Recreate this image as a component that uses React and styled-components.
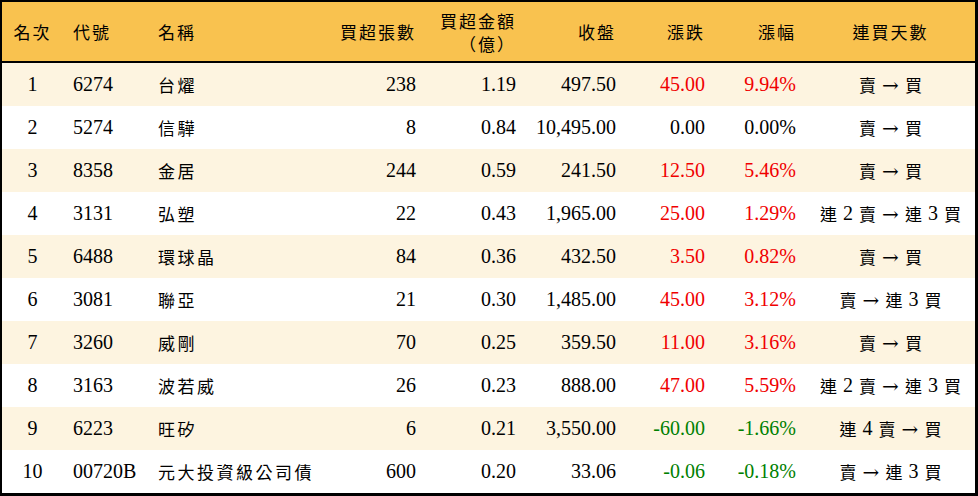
import React from "react";
import styled, { createGlobalStyle } from "styled-components";

const GlobalStyle = createGlobalStyle`
  html, body {
    margin: 0;
    padding: 0;
    background: #ffffff;
  }
`;

const rows = [
  { rank: 1, code: "6274", name: "台燿", vol: "238", amt: "1.19", close: "497.50", chg: "45.00", pct: "9.94%", days: ["賣", "→", "買"] },
  { rank: 2, code: "5274", name: "信驊", vol: "8", amt: "0.84", close: "10,495.00", chg: "0.00", pct: "0.00%", days: ["賣", "→", "買"] },
  { rank: 3, code: "8358", name: "金居", vol: "244", amt: "0.59", close: "241.50", chg: "12.50", pct: "5.46%", days: ["賣", "→", "買"] },
  { rank: 4, code: "3131", name: "弘塑", vol: "22", amt: "0.43", close: "1,965.00", chg: "25.00", pct: "1.29%", days: ["連", "2", "賣", "→", "連", "3", "買"] },
  { rank: 5, code: "6488", name: "環球晶", vol: "84", amt: "0.36", close: "432.50", chg: "3.50", pct: "0.82%", days: ["賣", "→", "買"] },
  { rank: 6, code: "3081", name: "聯亞", vol: "21", amt: "0.30", close: "1,485.00", chg: "45.00", pct: "3.12%", days: ["賣", "→", "連", "3", "買"] },
  { rank: 7, code: "3260", name: "威剛", vol: "70", amt: "0.25", close: "359.50", chg: "11.00", pct: "3.16%", days: ["賣", "→", "買"] },
  { rank: 8, code: "3163", name: "波若威", vol: "26", amt: "0.23", close: "888.00", chg: "47.00", pct: "5.59%", days: ["連", "2", "賣", "→", "連", "3", "買"] },
  { rank: 9, code: "6223", name: "旺矽", vol: "6", amt: "0.21", close: "3,550.00", chg: "-60.00", pct: "-1.66%", days: ["連", "4", "賣", "→", "買"] },
  { rank: 10, code: "00720B", name: "元大投資級公司債", vol: "600", amt: "0.20", close: "33.06", chg: "-0.06", pct: "-0.18%", days: ["賣", "→", "連", "3", "買"] },
];

const trendOf = (v) => {
  const n = parseFloat(v);
  if (n > 0) return "up";
  if (n < 0) return "down";
  return "flat";
};

const isHan = (s) => /[\u4e00-\u9fff]/.test(s);

const StreakPart = ({ text }) => {
  if (text === "→") return <Arrow>{text}</Arrow>;
  if (isHan(text)) return <StreakHan>{text}</StreakHan>;
  return <span>{text}</span>;
};

const App = () => {
  return (
    <>
      <GlobalStyle />
      <Table>
        <colgroup>
          <col style={{ width: 61 }} />
          <col style={{ width: 85 }} />
          <col style={{ width: 180 }} />
          <col style={{ width: 98 }} />
          <col style={{ width: 100 }} />
          <col style={{ width: 100 }} />
          <col style={{ width: 89 }} />
          <col style={{ width: 91 }} />
          <col />
        </colgroup>
        <thead>
          <tr>
            <Th align="center">名次</Th>
            <Th>代號</Th>
            <Th>名稱</Th>
            <Th align="right">買超張數</Th>
            <Th align="right">
              買超金額
              <br />
              （億）
            </Th>
            <Th align="right">收盤</Th>
            <Th align="right">漲跌</Th>
            <Th align="right">漲幅</Th>
            <Th align="center">連買天數</Th>
          </tr>
        </thead>
        <tbody>
          {rows.map((r, i) => (
            <Row key={r.rank} $shade={i % 2 === 0}>
              <Td align="center">{r.rank}</Td>
              <Td>{r.code}</Td>
              <Td>
                <Han>{r.name}</Han>
              </Td>
              <Td align="right">{r.vol}</Td>
              <Td align="right">{r.amt}</Td>
              <Td align="right">{r.close}</Td>
              <Td align="right" $trend={trendOf(r.chg)}>
                {r.chg}
              </Td>
              <Td align="right" $trend={trendOf(r.pct)}>
                {r.pct}
              </Td>
              <Td align="center">
                <Streak>
                  {r.days.map((t, k) => (
                    <StreakPart key={k} text={t} />
                  ))}
                </Streak>
              </Td>
            </Row>
          ))}
        </tbody>
      </Table>
    </>
  );
};

// Styled components
const Table = styled.table`
  width: 978px;
  height: 496px;
  box-sizing: border-box;
  table-layout: fixed;
  border-collapse: separate;
  border-spacing: 0;
  border-style: solid;
  border-color: #000;
  border-width: 2px 3px 3px 2px;
  font-family: "Liberation Serif", "Noto Sans CJK TC", serif;
  font-size: 20px;
  color: #000;
`;

const Th = styled.th`
  height: 59px;
  padding: 0 10px;
  background: #f9c24f;
  border-bottom: 2px solid #000;
  font-family: "Noto Sans CJK TC", sans-serif;
  font-weight: 400;
  font-size: 17px;
  letter-spacing: 2px;
  line-height: 23px;
  text-align: ${(p) => p.align || "left"};
  vertical-align: middle;
  white-space: nowrap;
`;

const Row = styled.tr`
  height: 43px;
  background: ${(p) => (p.$shade ? "#fdf4e0" : "#ffffff")};
`;

const Td = styled.td`
  padding: 0 10px;
  text-align: ${(p) => p.align || "left"};
  vertical-align: middle;
  white-space: nowrap;
  color: ${(p) =>
    p.$trend === "up" ? "#f00000" : p.$trend === "down" ? "#008000" : "#000"};
`;

const Han = styled.span`
  font-family: "Noto Sans CJK TC", sans-serif;
  font-size: 17px;
  letter-spacing: 2.5px;
`;

const Streak = styled.span`
  display: inline-flex;
  align-items: center;
  gap: 6px;
`;

const StreakHan = styled.span`
  font-family: "Noto Sans CJK TC", sans-serif;
  font-size: 17px;
`;

const Arrow = styled.span`
  font-family: "DejaVu Serif", serif;
  font-size: 20px;
  line-height: 1;
`;

export default App;
